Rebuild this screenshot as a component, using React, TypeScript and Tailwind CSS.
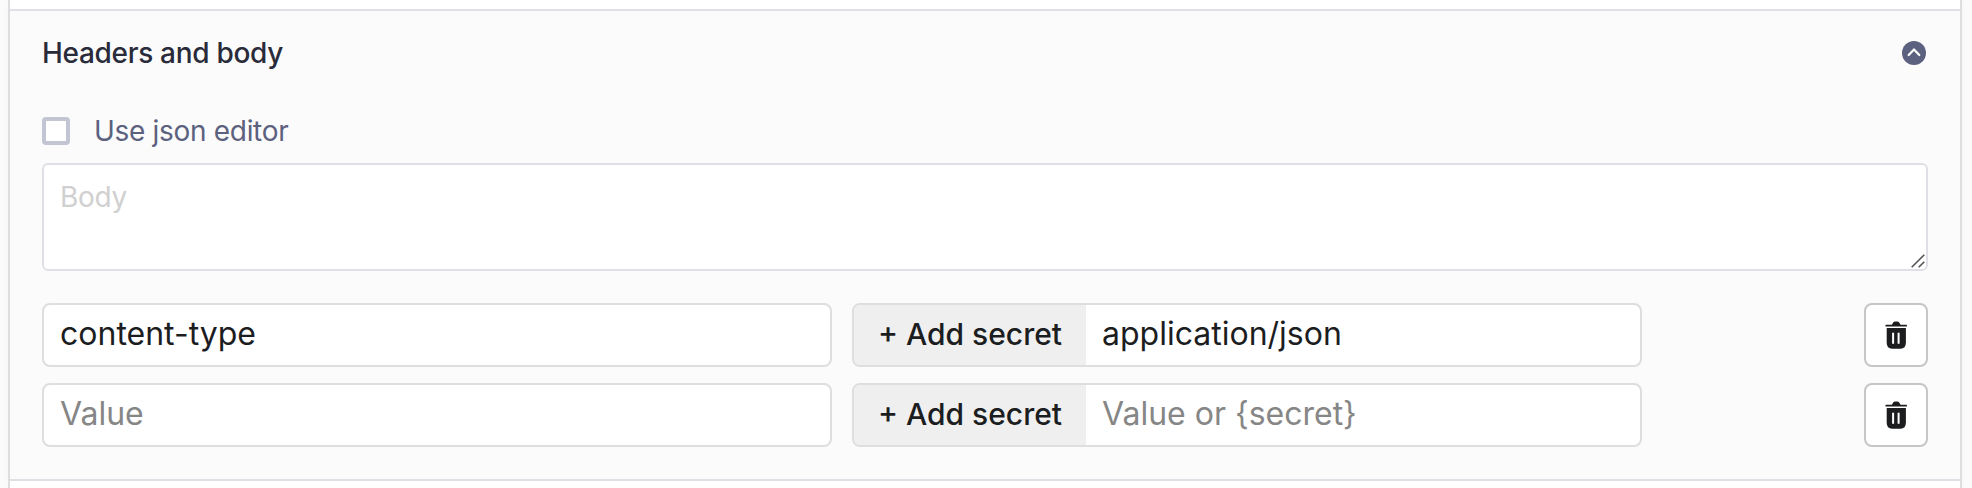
import React from "react";

const Chevron = () => (
  <svg viewBox="0 0 24 24" className="mr-0.5 h-6 w-6 shrink-0">
    <circle cx="12" cy="12" r="12" fill="#5c617f" />
    <path d="M6.700 14 12 8.500 17.300 14" fill="none" stroke="#fff" strokeWidth="2.200" strokeLinecap="round" />
  </svg>
);

const Trash = () => (
  <svg viewBox="0 0 22 28" className="h-7 w-[22px]">
    <path
      d="M1 3.800H6.600Q7.400 3.300 7.700 2.300 8.300.6 10 .6H12.400Q14.100.6 14.700 2.300 15 3.300 15.800 3.800H21.400Q22 3.800 22 4.700T21.400 5.600H1Q.4 5.600.4 4.700T1 3.800Z"
      fill="#1c1d1f"
    />
    <path d="M1.700 6.900H20.900V21.500Q20.900 27.700 15.400 27.700H7.200Q1.700 27.700 1.700 21.500Z" fill="#1c1d1f" />
    <path d="M8.100 11.700V22.700M13.600 11.700V22.700" stroke="#fff" strokeWidth="2" />
  </svg>
);

const Row = ({ name, value }: { name: string; value: string }) => (
  <div className="flex h-16 justify-between">
    <div className="flex">
      <input
        aria-label="Header name"
        defaultValue={name}
        placeholder="Value"
        className="h-16 w-[790px] rounded-lg border-2 border-[#dedede] bg-white px-4 pb-1 text-[32px] text-[#1c1d1f] outline-none placeholder:text-[#868686]"
      />
      <div className="ml-5 flex w-[790px] overflow-hidden rounded-lg border-2 border-[#dedede] bg-white">
        <button className="w-[232px] shrink-0 whitespace-nowrap bg-[#efefef] pb-0.5 text-[30px] font-medium text-[#1c1d1f]">
          + Add secret
        </button>
        <input
          aria-label="Header value"
          defaultValue={value}
          placeholder="Value or {secret}"
          className="min-w-0 flex-1 px-4 pb-0.5 text-[32px] text-[#1c1d1f] outline-none placeholder:text-[#868686]"
        />
      </div>
    </div>
    <button aria-label="Delete" className="flex h-16 w-16 items-center justify-center rounded-lg border-2 border-[#c6c6c6] bg-white">
      <Trash />
    </button>
  </div>
);

export default function App() {
  return (
    <div className="h-[488px] w-[1972px] overflow-hidden bg-[#fbfbfb] pl-2 font-['Inter',sans-serif]">
      <div className="h-[488px] w-[1954px] border-x-2 border-[#dedede] bg-white pt-[9px] shadow-[0_0_8px_rgba(0,0,0,0.03)]">
        <section className="h-[472px] border-y-2 border-[#dfdfe6] bg-[#fbfbfb] px-8">
          <header className="flex h-[84px] items-center justify-between">
            <h2 className="text-[28px] font-medium tracking-[-0.31px] text-[#2a2b3a]">Headers and body</h2>
            <Chevron />
          </header>
          <label className="flex h-[68px] items-center gap-6 pt-1 text-[28px] tracking-[-0.31px] text-[#5c617f]">
            <span className="h-7 w-7 rounded-[4px] border-4 border-[#c2c5d4] bg-white" />
            Use json editor
          </label>
          <div className="relative">
            <textarea
              placeholder="Body"
              className="block h-[108px] w-full resize-none rounded-md border-2 border-[#dfdfe6] bg-white px-4 py-[11px] text-[28px] tracking-[-0.31px] outline-none placeholder:text-[#d0d0d0]"
            />
            <svg viewBox="0 0 14 14" className="absolute right-[3px] bottom-[3px] h-3.5 w-3.5">
              <path d="M.7 13.300 13.300.7M7.700 13.300 13.300 7.700" stroke="#555" strokeWidth="1.600" />
            </svg>
          </div>
          <div className="mt-8 flex flex-col gap-4">
            <Row name="content-type" value="application/json" />
            <Row name="" value="" />
          </div>
        </section>
      </div>
    </div>
  );
}
